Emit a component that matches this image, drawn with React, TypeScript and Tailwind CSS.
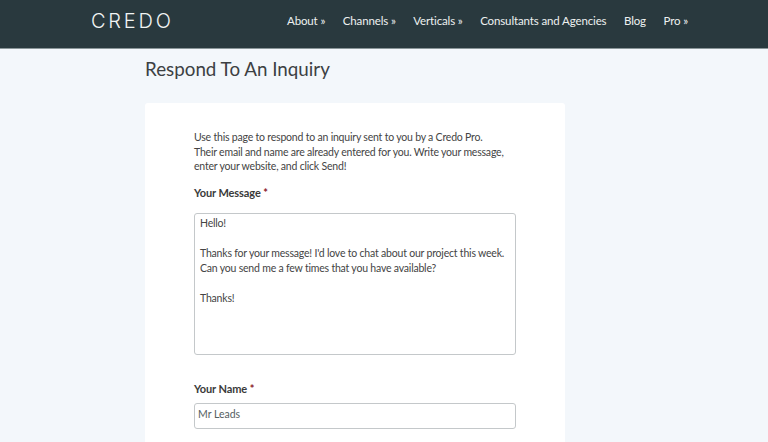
const nav = ["About »", "Channels »", "Verticals »", "Consultants and Agencies", "Blog", "Pro »"];

const message = `Hello!

Thanks for your message! I'd love to chat about our project this week.
Can you send me a few times that you have available?

Thanks!`;

function FieldLabel({ children }: { children: string }) {
  return (
    <label className="block text-[11px] leading-[16px] font-bold tracking-[-0.1px] text-[#3a3a3a]">
      {children} <span className="text-[#8b1a2b]">*</span>
    </label>
  );
}

export default function App() {
  return (
    <div className="h-[442px] overflow-hidden bg-[#f3f7fb] font-['Lato',sans-serif]">
      <header className="flex h-[49px] items-center border-b border-[#8a9699] bg-[#29393e] pb-[6px] pl-[91px]">
        <div className="w-[196px] font-['Inter',sans-serif] text-[20px] leading-none font-light tracking-[0.14em] text-[#f1f4f4]">CREDO</div>
        <nav className="flex gap-[17.5px] text-[11.5px] tracking-[-0.13px] text-[#eef1f1]">
          {nav.map((item) => <a key={item}>{item}</a>)}
        </nav>
      </header>
      <main className="ml-[145px] w-[420px]">
        <h1 className="pt-[8px] pb-[22px] text-[18.8px] leading-[24px] text-[#3c4043]">Respond To An Inquiry</h1>
        <section className="rounded-t-[3px] bg-white px-[49px] pt-[27px] pb-10">
          <p className="text-[10.5px] leading-[14.6px] tracking-[-0.2px] whitespace-nowrap text-[#444]">
            Use this page to respond to an inquiry sent to you by a Credo Pro.<br />
            Their email and name are already entered for you. Write your message,<br />
            enter your website, and click Send!
          </p>
          <div className="mt-[11px]"><FieldLabel>Your Message</FieldLabel></div>
          <textarea
            readOnly
            value={message}
            className="mt-[12px] block h-[142px] w-[322px] resize-none overflow-hidden rounded-[3px] border border-[#c4c8ca] px-[5px] py-[2px] text-[10.5px] leading-[15px] tracking-[-0.2px] whitespace-pre text-[#444] outline-none"
          />
          <div className="mt-[26px]"><FieldLabel>Your Name</FieldLabel></div>
          <input
            readOnly
            value="Mr Leads"
            className="mt-[6px] block h-[26px] w-[322px] rounded-[3px] border border-[#c4c8ca] px-[3px] pb-[3px] text-[10.5px] text-[#55605f] outline-none"
          />
        </section>
      </main>
    </div>
  );
}
